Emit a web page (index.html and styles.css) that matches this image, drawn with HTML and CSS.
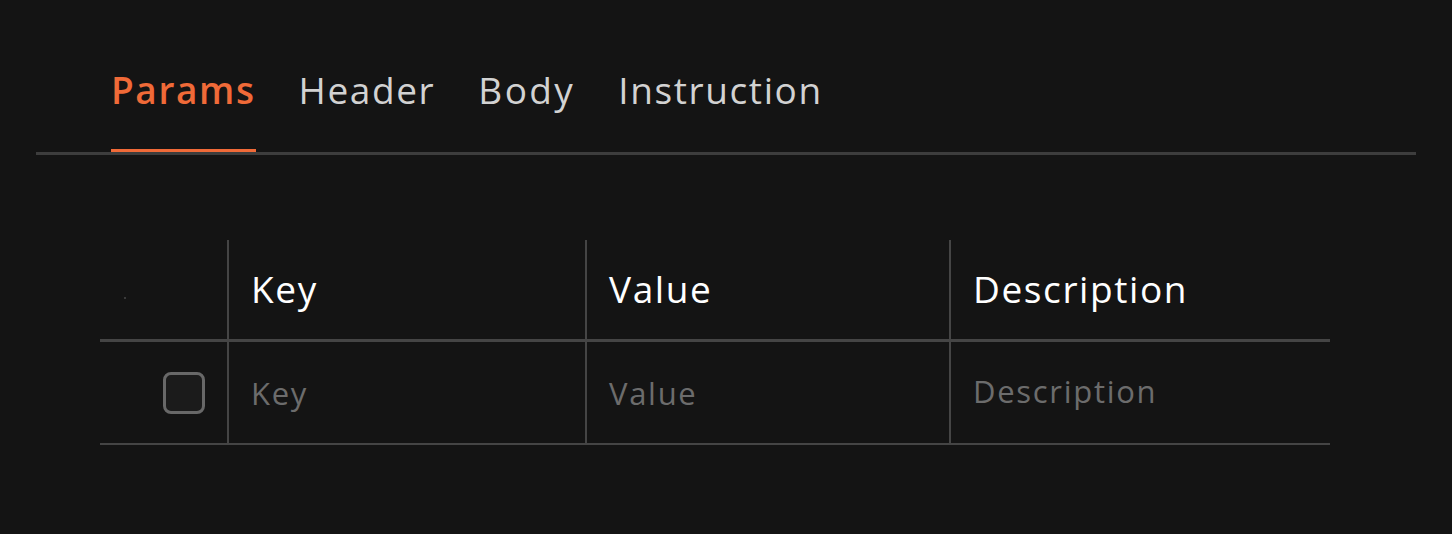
FILE: index.html
```html
<!DOCTYPE html>
<html lang="en">
<head>
<meta charset="utf-8">
<title>Params</title>
<link rel="stylesheet" href="styles.css">
</head>
<body>
<div class="panel">
  <nav class="tabs">
    <div class="tab active">Params</div>
    <div class="tab">Header</div>
    <div class="tab body-tab">Body</div>
    <div class="tab">Instruction</div>
  </nav>
  <div class="table">
    <div class="row head">
      <div class="cell sel"><span class="dot"></span></div>
      <div class="cell">Key</div>
      <div class="cell">Value</div>
      <div class="cell">Description</div>
    </div>
    <div class="row body">
      <div class="cell sel check-cell"><span class="checkbox"></span></div>
      <div class="cell ph">Key</div>
      <div class="cell ph">Value</div>
      <div class="cell ph desc">Description</div>
    </div>
  </div>
</div>
</body>
</html>
```
FILE: styles.css
```css
html, body {
  margin: 0;
  padding: 0;
  background: #141414;
}
body {
  font-family: "Open Sans", "Noto Sans", sans-serif;
  width: 1452px;
  height: 534px;
  overflow: hidden;
}
.panel {
  padding: 0 36px;
}
.tabs {
  display: flex;
  gap: 43px;
  padding: 68px 0 0 75px;
  border-bottom: 3px solid #3d3d3d;
}
.tab {
  font-size: 37px;
  line-height: 44px;
  letter-spacing: 1.6px;
  color: #d2d2d2;
  padding-bottom: 37px;
  border-bottom: 3px solid transparent;
}
.tab.body-tab {
  letter-spacing: 2.4px;
}
.tab.active {
  color: #f06a38;
  font-weight: 600;
  border-bottom-color: #f06a38;
}
.table {
  margin: 85px 0 0 64px;
  width: 1230px;
}
.row {
  display: grid;
  grid-template-columns: 127px 358px 364px 381px;
  border-bottom: 3px solid #454545;
}
.row.head {
  height: 99px;
}
.row.body {
  height: 101px;
  border-bottom-width: 2px;
}
.cell {
  display: flex;
  align-items: center;
  padding-left: 22px;
  border-left: 2px solid #454545;
  color: #ffffff;
  font-size: 37px;
  letter-spacing: 1.6px;
  padding-bottom: 3px;
}
.cell.sel {
  border-left: none;
  padding-left: 0;
}
.head .sel {
  padding-left: 24px;
  padding-top: 20px;
}
.dot {
  width: 2px;
  height: 2px;
  background: #3a3a3a;
}
.check-cell {
  justify-content: flex-end;
  padding-right: 22px;
  padding-bottom: 0;
}
.checkbox {
  width: 36px;
  height: 36px;
  border: 3px solid #686868;
  border-radius: 8px;
  background: #1b1b1b;
}
.cell.ph {
  color: #6c6c6c;
  font-size: 31px;
  letter-spacing: 1.7px;
  padding-bottom: 0;
}
.cell.desc {
  padding-bottom: 4px;
}
```
